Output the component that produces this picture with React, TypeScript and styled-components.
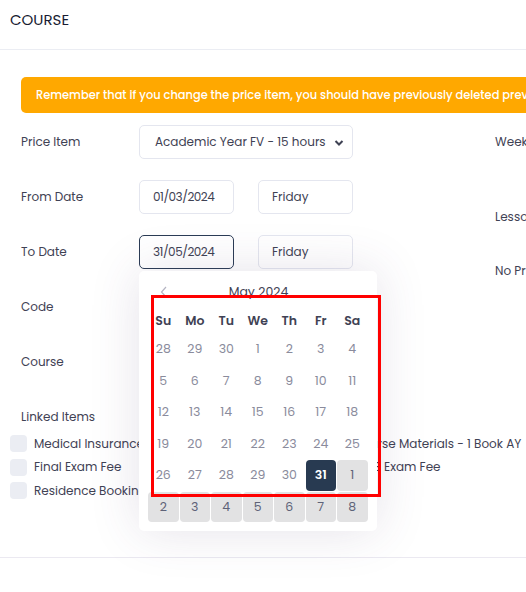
import React from "react";
import styled, { createGlobalStyle } from "styled-components";

const Global = createGlobalStyle`
  html, body { margin: 0; padding: 0; background: #fff; }
  body { font-family: Poppins, "Inter", "Noto Sans", sans-serif; color: #3f4254; }
  * { box-sizing: border-box; }
`;

const Page = styled.div`
  position: relative;
  width: 526px;
  height: 592px;
  overflow: hidden;
  background: #fff;
`;

const Header = styled.div`
  height: 50px;
  padding: 11px 10px 0;
  border-bottom: 1px solid #ebedf3;
  font-size: 15px;
  line-height: 18px;
  color: #181c32;
`;

const Body = styled.div`
  padding: 27px 0 0 21px;
  height: 508px;
  border-bottom: 1px solid #ebe9f1;
`;

const Banner = styled.div`
  width: 560px;
  height: 36px;
  border-radius: 5px;
  background: #ffa800;
  color: #fff;
  font-size: 11.4px;
  font-weight: 500;
  line-height: 36px;
  padding-left: 15px;
  white-space: nowrap;
  overflow: hidden;
`;

const FormGrid = styled.div`
  display: grid;
  grid-template-columns: 474px 200px;
  margin-top: 12px;
`;

const LeftCol = styled.div`
  display: flex;
  flex-direction: column;
`;

const Row = styled.div`
  display: flex;
  align-items: center;
  height: 34px;
  margin-bottom: 21px;
  position: relative;
`;

const Label = styled.div`
  width: 118px;
  flex: none;
  font-size: 12px;
  color: #3f4254;
`;

const Controls = styled.div`
  display: flex;
  gap: 24px;
  align-items: center;
  position: relative;
`;

const Field = styled.div<{ $w: number; $focus?: boolean }>`
  position: relative;
  width: ${(p) => p.$w}px;
  height: 34px;
  border: 1px solid ${(p) => (p.$focus ? "#2b3c55" : "#e4e6ef")};
  border-radius: 5px;
  background: #fff;
  font-size: 12px;
  color: #3f4254;
  display: flex;
  align-items: center;
  padding-left: 13px;
  white-space: nowrap;
`;

const DateField = styled(Field)`
  letter-spacing: -0.5px;
`;

const SelectField = styled(Field)`
  padding-left: 15px;
`;

const Chevron = styled.svg`
  position: absolute;
  right: 8px;
  top: 13px;
`;

const CheckList = styled.div`
  display: grid;
  grid-template-columns: 319px 240px;
  row-gap: 6.5px;
  margin-left: -11px;
  margin-top: -20px;
`;

const CheckItem = styled.label`
  display: flex;
  align-items: center;
  gap: 7px;
  font-size: 12px;
  color: #3f4254;
  white-space: nowrap;
  height: 17px;
`;

const Box = styled.span`
  width: 17px;
  height: 17px;
  border-radius: 4px;
  background: #ebedf3;
  flex: none;
`;

const RightCol = styled.div`
  display: flex;
  flex-direction: column;
`;

const RightLabel = styled.div<{ $mt: number }>`
  height: 34px;
  line-height: 34px;
  font-size: 12px;
  color: #3f4254;
  margin-top: ${(p) => p.$mt}px;
  white-space: nowrap;
`;

const Popover = styled.div`
  position: absolute;
  left: 0;
  top: 36px;
  width: 238px;
  height: 260px;
  background: #fff;
  border-radius: 5px;
  box-shadow: 0 0 50px 0 rgba(82, 63, 105, 0.15);
  padding: 9px 8px 9px 9px;
  z-index: 5;
`;

const CalHead = styled.div`
  position: relative;
  height: 24px;
  display: flex;
  align-items: center;
  justify-content: center;
  font-size: 12.5px;
  color: #3f4254;
`;

const PrevArrow = styled.svg`
  position: absolute;
  left: 12px;
  top: 6px;
`;

const Grid = styled.div`
  display: grid;
  grid-template-columns: repeat(7, 30.5px);
  column-gap: 1px;
  row-gap: 1px;
  margin-top: 4px;
`;

const DayName = styled.div`
  height: 25px;
  display: flex;
  align-items: center;
  justify-content: center;
  font-size: 12.5px;
  font-weight: 600;
  color: #3f4254;
`;

const Day = styled.div<{ $kind: "cur" | "prev" | "next" | "sel" }>`
  height: 30.5px;
  display: flex;
  align-items: center;
  justify-content: center;
  font-size: 12.5px;
  border-radius: 4px;
  color: ${(p) => (p.$kind === "sel" ? "#fff" : p.$kind === "next" ? "#5e6278" : "#8a8b9c")};
  background: ${(p) => (p.$kind === "sel" ? "#283a51" : p.$kind === "next" ? "#e2e2e3" : "transparent")};
  font-weight: ${(p) => (p.$kind === "sel" ? 600 : 400)};
`;

const Annotation = styled.div`
  position: absolute;
  left: 151px;
  top: 295px;
  width: 230px;
  height: 202px;
  border: 3px solid #f00;
  z-index: 10;
  pointer-events: none;
`;

type Kind = "cur" | "prev" | "next" | "sel";
const weeks: [number, Kind][][] = [
  [[28, "prev"], [29, "prev"], [30, "prev"], [1, "cur"], [2, "cur"], [3, "cur"], [4, "cur"]],
  [5, 6, 7, 8, 9, 10, 11].map((d) => [d, "cur"] as [number, Kind]),
  [12, 13, 14, 15, 16, 17, 18].map((d) => [d, "cur"] as [number, Kind]),
  [19, 20, 21, 22, 23, 24, 25].map((d) => [d, "cur"] as [number, Kind]),
  [[26, "cur"], [27, "cur"], [28, "cur"], [29, "cur"], [30, "cur"], [31, "sel"], [1, "next"]],
  [2, 3, 4, 5, 6, 7, 8].map((d) => [d, "next"] as [number, Kind]),
];

const dayNames = ["Su", "Mo", "Tu", "We", "Th", "Fr", "Sa"];

function Calendar() {
  return (
    <Popover>
      <CalHead>
        <PrevArrow width="8" height="12" viewBox="0 0 8 12">
          <path d="M6 1 L1.5 6 L6 11" fill="none" stroke="#b5b5c3" strokeWidth="1.2" />
        </PrevArrow>
        May 2024
      </CalHead>
      <Grid>
        {dayNames.map((n) => (
          <DayName key={n}>{n}</DayName>
        ))}
        {weeks.flat().map(([d, k], i) => (
          <Day key={i} $kind={k}>
            {d}
          </Day>
        ))}
      </Grid>
    </Popover>
  );
}

export default function App() {
  return (
    <Page>
      <Global />
      <Header>COURSE</Header>
      <Body>
        <Banner>
          Remember that if you change the price item, you should have previously deleted previous linked items
        </Banner>
        <FormGrid>
          <LeftCol>
            <Row>
              <Label>Price Item</Label>
              <SelectField $w={214}>
                Academic Year FV - 15 hours
                <Chevron width="10" height="8" viewBox="0 0 10 8">
                  <path d="M1.5 2 L5 5.5 L8.5 2" fill="none" stroke="#3f4254" strokeWidth="2" />
                </Chevron>
              </SelectField>
            </Row>
            <Row>
              <Label>From Date</Label>
              <Controls>
                <DateField $w={95}>01/03/2024</DateField>
                <Field $w={95}>Friday</Field>
              </Controls>
            </Row>
            <Row>
              <Label>To Date</Label>
              <Controls>
                <DateField $w={95} $focus>
                  31/05/2024
                </DateField>
                <Field $w={95}>Friday</Field>
                <Calendar />
              </Controls>
            </Row>
            <Row>
              <Label>Code</Label>
              <Field $w={214}></Field>
            </Row>
            <Row>
              <Label>Course</Label>
              <Field $w={214}></Field>
            </Row>
            <Row>
              <Label>Linked Items</Label>
            </Row>
          </LeftCol>
          <RightCol>
            <RightLabel $mt={0}>Weeks</RightLabel>
            <RightLabel $mt={41}>Lessons</RightLabel>
            <RightLabel $mt={20}>No Price</RightLabel>
          </RightCol>
        </FormGrid>
        <CheckList>
          <CheckItem>
            <Box />
            Medical Insurance
          </CheckItem>
          <CheckItem>
            <Box />
            Course Materials - 1 Book AY
          </CheckItem>
          <CheckItem>
            <Box />
            Final Exam Fee
          </CheckItem>
          <CheckItem>
            <Box />
            IELTS Exam Fee
          </CheckItem>
          <CheckItem>
            <Box />
            Residence Booking
          </CheckItem>
        </CheckList>
      </Body>
      <Annotation />
    </Page>
  );
}
